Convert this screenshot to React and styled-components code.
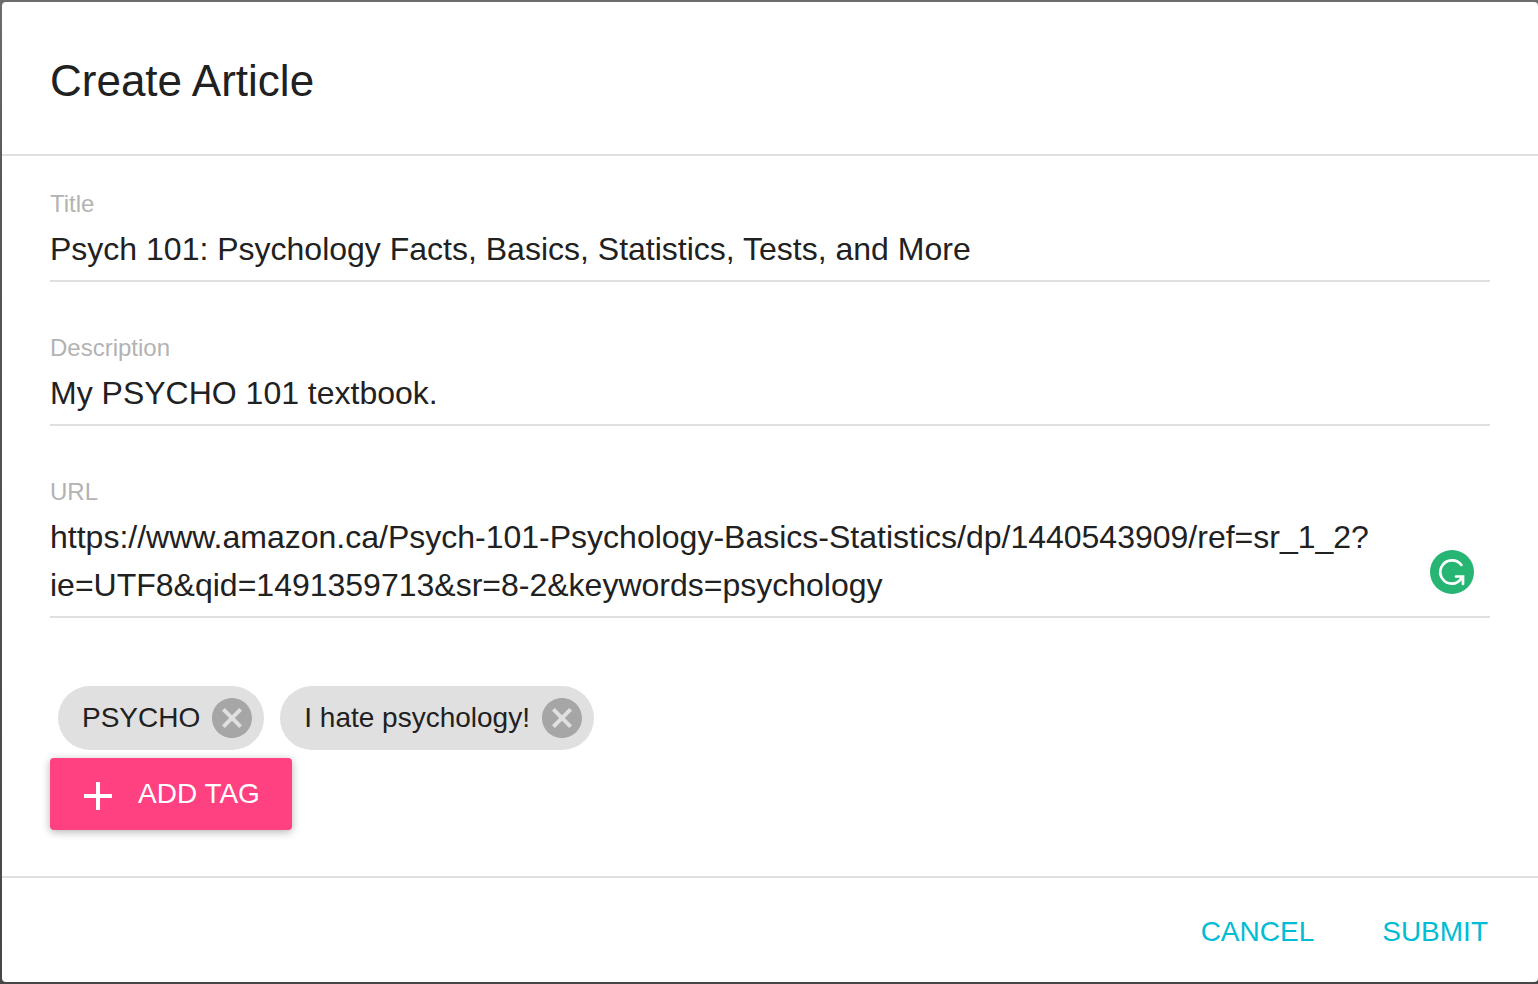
import React, { useState } from "react";
import styled, { createGlobalStyle } from "styled-components";

const Global = createGlobalStyle`
  *, *::before, *::after { box-sizing: border-box; }
  body {
    margin: 0;
    color: #212121;
    font-family: "Liberation Sans", Arial, sans-serif;
  }
  button, input, textarea { font: inherit; color: inherit; }
`;

const Page = styled.div`
  min-height: 100vh;
  padding: 2px 0 2px 2px;
  display: flex;
  background: linear-gradient(#6e6c6d, #585657 20%, #484647);
`;

const Dialog = styled.form`
  flex: 1;
  display: flex;
  flex-direction: column;
  background: #fff;
  border-radius: 4px;
  overflow: hidden;
`;

const Title = styled.h1`
  margin: 0;
  padding: 51px 48px 45px;
  border-bottom: 2px solid #e0e0e0;
  font-size: 44px;
  line-height: 56px;
  font-weight: 400;
`;

const Body = styled.div`
  flex: 1;
  padding: 32px 48px 46px;
`;

const Field = styled.div`
  position: relative;
  display: flex;
  flex-direction: column;
  margin-bottom: 50px;
  border-bottom: 2px solid #e0e0e0;
`;

const Label = styled.label`
  font-size: 24px;
  line-height: 32px;
  color: #b3b3b3;
`;

const inputStyles = `
  width: 100%;
  border: 0;
  padding: 0;
  margin: 5px 0 7px;
  background: transparent;
  outline: none;
  font-size: 32px;
  line-height: 48px;
`;

const TextInput = styled.input`
  ${inputStyles}
  height: 48px;
`;

const TextArea = styled.textarea`
  ${inputStyles}
  height: 96px;
  resize: none;
  overflow: hidden;
`;

const Badge = styled.svg`
  position: absolute;
  right: 16px;
  bottom: 22px;
  width: 44px;
  height: 44px;
`;

const Chips = styled.div`
  display: flex;
  flex-wrap: wrap;
  gap: 16px;
  padding: 18px 8px 8px;
`;

const Chip = styled.div`
  display: flex;
  align-items: center;
  gap: 12px;
  height: 64px;
  padding: 0 12px 0 24px;
  border-radius: 32px;
  background: #e0e0e0;
  font-size: 28px;
  line-height: 64px;
`;

const ChipDelete = styled.button`
  display: flex;
  padding: 0;
  border: 0;
  background: none;
  cursor: pointer;
`;

const AddButton = styled.button`
  display: block;
  height: 72px;
  padding: 0 32px 0 24px;
  border: 0;
  border-radius: 4px;
  background: #ff4081;
  color: #fff;
  font-size: 28px;
  line-height: 72px;
  box-shadow: 0 2px 8px rgba(0, 0, 0, 0.3);
  cursor: pointer;

  svg {
    margin-right: 16px;
    vertical-align: middle;
  }
`;

const Actions = styled.footer`
  display: flex;
  justify-content: flex-end;
  gap: 32px;
  padding: 16px 32px 12px;
  border-top: 2px solid #e0e0e0;
`;

const FlatButton = styled.button`
  height: 76px;
  padding: 0 18px;
  border: 0;
  background: none;
  color: #00bcd4;
  font-size: 28px;
  cursor: pointer;
`;

const CloseIcon = () => (
  <svg width="40" height="40" viewBox="2 2 20 20" fill="#a6a6a6" aria-hidden="true">
    <path d="M12 2C6.47 2 2 6.47 2 12s4.47 10 10 10 10-4.47 10-10S17.53 2 12 2zm5 13.59L15.59 17 12 13.41 8.41 17 7 15.59 10.59 12 7 8.41 8.41 7 12 10.59 15.59 7 17 8.41 13.41 12 17 15.59z" />
  </svg>
);

const PlusIcon = () => (
  <svg width="48" height="48" viewBox="0 0 24 24" fill="#fff" aria-hidden="true">
    <path d="M19 13h-6v6h-2v-6H5v-2h6V5h2v6h6v2z" />
  </svg>
);

const GrammarIcon = () => (
  <Badge viewBox="0 0 44 44" aria-hidden="true">
    <circle cx="22" cy="22" r="22" fill="#27b573" />
    <path
      d="M31.4 15A11.7 11.7 0 1 0 22 33.7C26.5 33.7 29.5 31.5 32 27.5M26 26.5H33V34"
      fill="none"
      stroke="#fff"
      strokeWidth="2.7"
      strokeLinecap="round"
    />
  </Badge>
);

const tagNames = ["PSYCHO", "I hate psychology!"];

export default function App() {
  const [tags, setTags] = useState(tagNames);
  return (
    <>
      <Global />
      <Page>
        <Dialog onSubmit={(e) => e.preventDefault()}>
          <Title>Create Article</Title>
          <Body>
            <Field>
              <Label htmlFor="title">Title</Label>
              <TextInput id="title" defaultValue="Psych 101: Psychology Facts, Basics, Statistics, Tests, and More" />
            </Field>
            <Field>
              <Label htmlFor="description">Description</Label>
              <TextInput id="description" defaultValue="My PSYCHO 101 textbook." />
            </Field>
            <Field>
              <Label htmlFor="url">URL</Label>
              <TextArea
                id="url"
                spellCheck={false}
                defaultValue="https://www.amazon.ca/Psych-101-Psychology-Basics-Statistics/dp/1440543909/ref=sr_1_2?ie=UTF8&qid=1491359713&sr=8-2&keywords=psychology"
              />
              <GrammarIcon />
            </Field>
            <Chips>
              {tags.map((tag) => (
                <Chip key={tag}>
                  {tag}
                  <ChipDelete
                    type="button"
                    aria-label={`Remove ${tag}`}
                    onClick={() => setTags(tags.filter((t) => t !== tag))}
                  >
                    <CloseIcon />
                  </ChipDelete>
                </Chip>
              ))}
            </Chips>
            <AddButton type="button">
              <PlusIcon />
              ADD TAG
            </AddButton>
          </Body>
          <Actions>
            <FlatButton type="button">CANCEL</FlatButton>
            <FlatButton type="submit">SUBMIT</FlatButton>
          </Actions>
        </Dialog>
      </Page>
    </>
  );
}
